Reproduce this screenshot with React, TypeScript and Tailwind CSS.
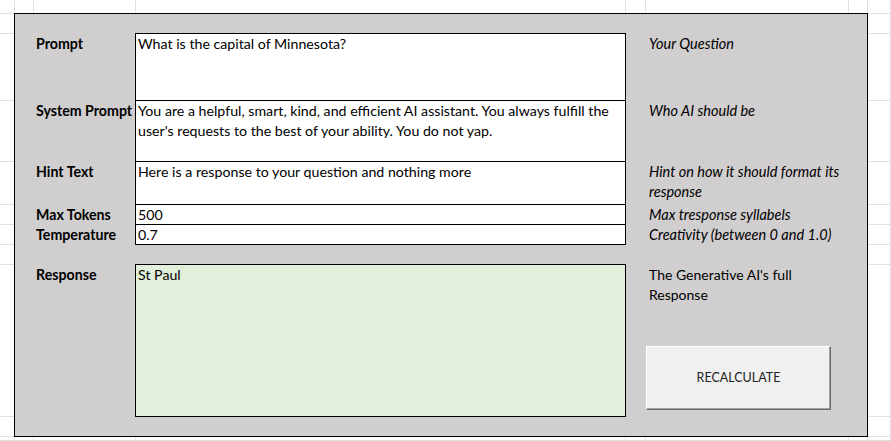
import React from "react";

const COLS = 8;
const ROWS = 11;

export default function App() {
  const cells = [];
  for (let r = 0; r < ROWS; r++) {
    for (let c = 0; c < COLS; c++) {
      cells.push(
        <div
          key={`${r}-${c}`}
          className="border-r border-b border-[#e1e1e1]"
          style={{ gridRow: r + 1, gridColumn: c + 1 }}
        />
      );
    }
  }

  const label = "pl-[21px] pt-px font-bold whitespace-nowrap text-[14.2px]";
  const note = "pl-[23px] pt-px italic whitespace-nowrap text-[14.5px]";
  const box = "border-l border-r border-t border-black bg-white pl-[2px] whitespace-nowrap text-[14.2px]";

  return (
    <div
      className="grid h-[441px] w-full overflow-hidden bg-white text-black grid-cols-[15px_19px_102px_490px_20px_203px_19px_1fr] grid-rows-[14px_20px_67px_61px_43px_20px_20px_20px_152px_20px_1fr]"
      style={{ fontFamily: "Lato, 'Liberation Sans', sans-serif" }}
    >
      {cells}
      <div className="col-start-2 col-end-8 row-start-2 row-end-11 -ml-px -mt-px border border-black bg-[#d0cece] grid grid-cols-[120px_491px_1fr] grid-rows-[19px_67px_61px_43px_20px_21px_19px_153px_1fr] text-[14px] leading-[20px]">
        {/* row 1 spacer */}
        <div className="col-span-3" />

        {/* Prompt */}
        <div className={label}>Prompt</div>
        <div className={box}>What is the capital of Minnesota?</div>
        <div className={note}>Your Question</div>

        {/* System Prompt */}
        <div className={label}>System Prompt</div>
        <div className={box}>
          You are a helpful, smart, kind, and efficient AI assistant. You always fulfill the
          <br />
          user's requests to the best of your ability. You do not yap.
        </div>
        <div className={note}>Who AI should be</div>

        {/* Hint Text */}
        <div className={label}>Hint Text</div>
        <div className={box}>Here is a response to your question and nothing more</div>
        <div className={note}>
          Hint on how it should format its
          <br />
          response
        </div>

        {/* Max Tokens */}
        <div className={label}>Max Tokens</div>
        <div className={box}>500</div>
        <div className={note}>Max tresponse syllabels</div>

        {/* Temperature */}
        <div className={label}>Temperature</div>
        <div className={`${box} border-b`}>0.7</div>
        <div className={note}>Creativity (between 0 and 1.0)</div>

        {/* spacer */}
        <div className="col-span-3" />

        {/* Response */}
        <div className={label}>Response</div>
        <div className="border border-black bg-[#e2efda] pl-[2px] whitespace-nowrap text-[14.2px]">St Paul</div>
        <div className="flex flex-col items-start">
          <div className="pl-[23px] pt-px whitespace-nowrap">
            The Generative AI's full
            <br />
            Response
          </div>
          <button
            type="button"
            className="ml-[20px] mt-[41px] flex h-[64px] w-[185px] items-center justify-center border-l border-t border-r border-b border-l-white border-t-white border-r-[#696969] border-b-[#696969] bg-[#f0f0f0] text-[12.5px] text-[#222] shadow-[inset_-1px_-1px_0_#a0a0a0]"
          >
            RECALCULATE
          </button>
        </div>
      </div>
    </div>
  );
}
